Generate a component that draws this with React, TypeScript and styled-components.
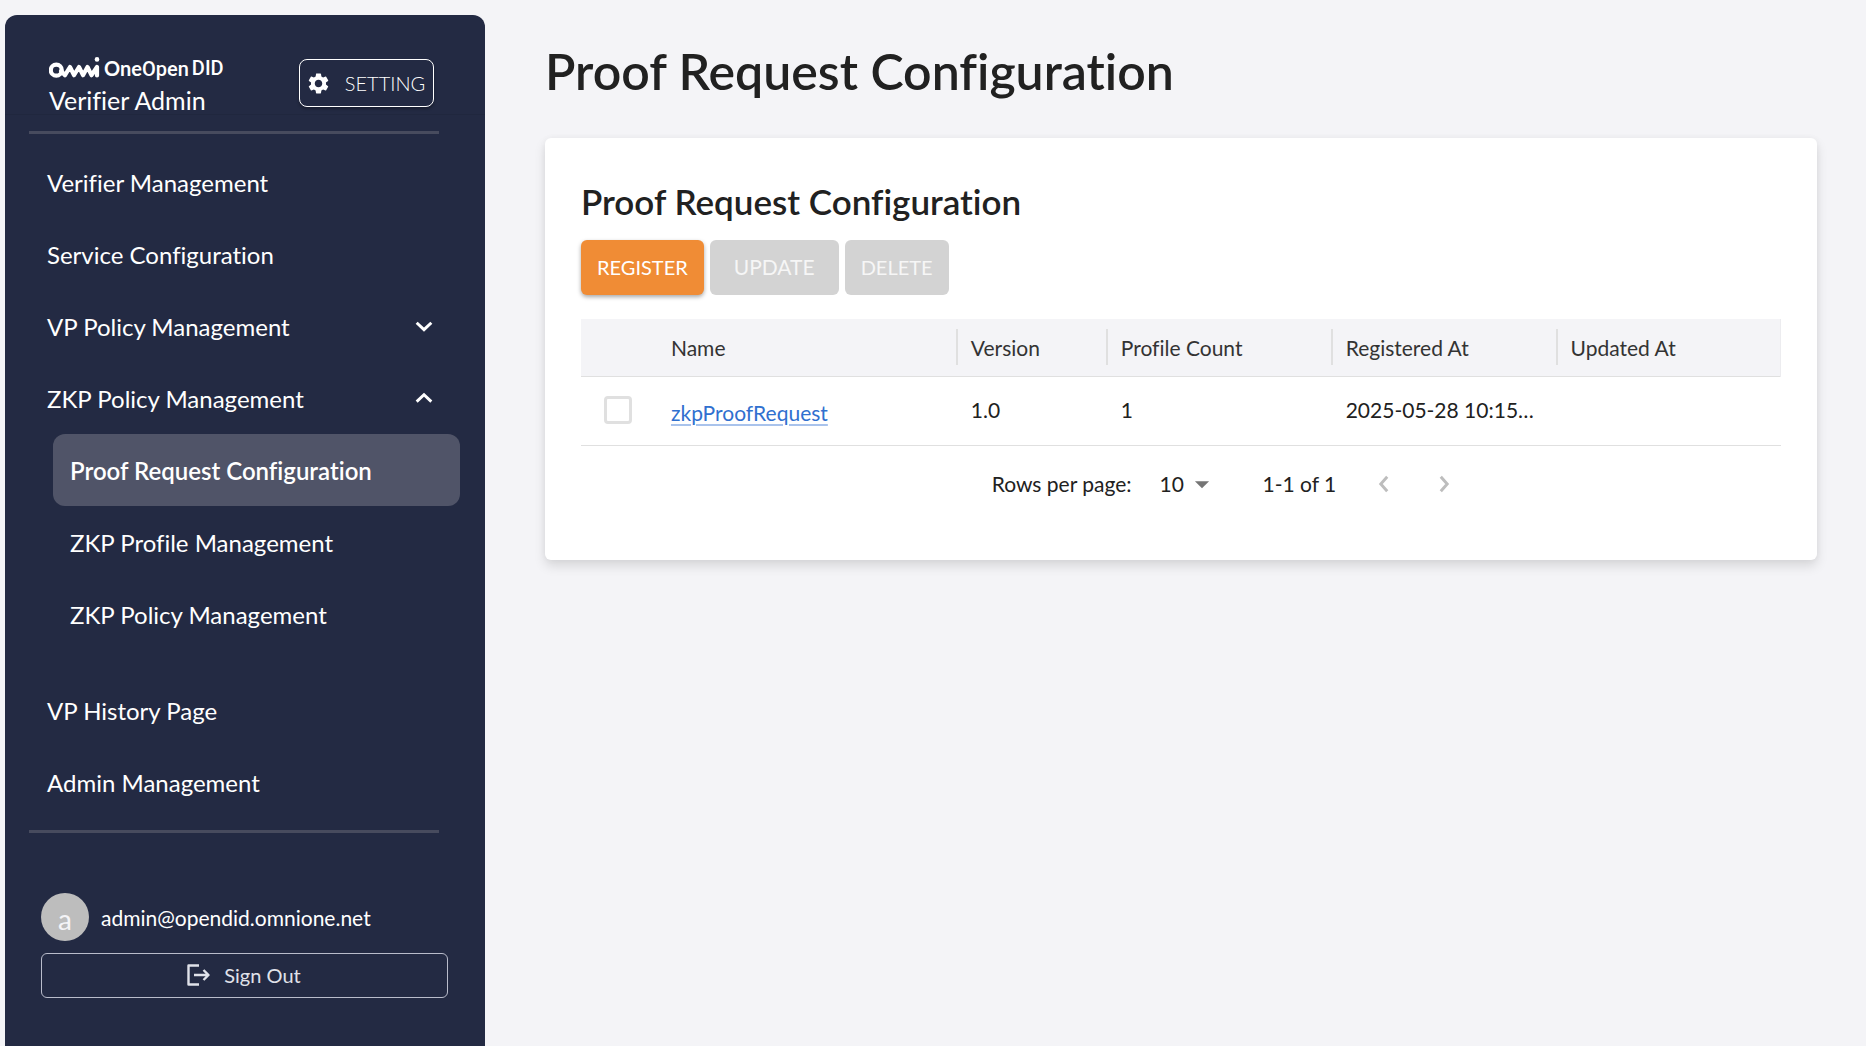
import React, { useState } from "react";
import styled, { createGlobalStyle, css } from "styled-components";
import { MdSettings, MdArrowDropDown } from "react-icons/md";

const Global = createGlobalStyle`
  *, *::before, *::after { box-sizing: border-box; }
  body {
    margin: 0;
    background: #f4f4f7;
    color: #212121;
    font-family: Lato, "Liberation Sans", sans-serif;
    font-size: 21px;
    font-variant-ligatures: none;
  }
  button, input, select { font: inherit; color: inherit; }
  h1, h2, p, ul { margin: 0; padding: 0; }
  ul { list-style: none; }
`;

const Layout = styled.div`
  display: flex;
  align-items: stretch;
  min-height: 100vh;
  padding: 15px 0 0 5px;
`;

const Sidebar = styled.aside`
  flex: 0 0 480px;
  border-radius: 12px 12px 0 0;
  background: #232a43;
  color: #fff;
`;

const Brand = styled.header`
  display: flex;
  justify-content: space-between;
  align-items: flex-start;
  height: 100px;
  margin-bottom: 16px;
  padding: 38px 51px 0 44px;
  border-bottom: 1px solid #20273e;
`;

const Logo = styled.div`
  display: flex;
  align-items: center;
  gap: 4px;
  height: 30px;
`;

const Wordmark = styled.span`
  display: flex;
  gap: 3px;
  font-size: 20px;
  font-weight: 700;
  line-height: 30px;
`;

const Narrow = styled.span`
  font-family: Roboto, sans-serif;
  font-weight: 500;
`;

const Product = styled.p`
  font-size: 25px;
  line-height: 34px;
`;

const SettingButton = styled.button`
  display: flex;
  align-items: center;
  justify-content: center;
  gap: 14px;
  width: 135px;
  height: 48px;
  margin-top: 6px;
  padding: 0 2px 0 0;
  border: 1px solid #fff;
  border-radius: 8px;
  background: transparent;
  box-shadow: 0 2px 3px rgba(0, 0, 0, 0.3);
  font-size: 20px;
  font-weight: 300;
`;

const Divider = styled.hr`
  height: 3px;
  margin: 0 46px 0 24px;
  border: 0;
  background: #474b5e;
`;

const Nav = styled.nav`
  padding: 12px 25px 12px 0;
`;

const rowBase = css`
  display: flex;
  align-items: center;
  justify-content: space-between;
  width: 100%;
  height: 72px;
  border: 0;
  background: transparent;
  color: #fff;
  font-size: 24px;
  text-decoration: none;
`;

const NavLink = styled.a`
  ${rowBase}
  padding: 0 0 0 42px;
`;

const NavToggle = styled.button`
  ${rowBase}
  padding: 0 25px 0 42px;
`;

const SubNav = styled.ul`
  padding: 0 0 24px 48px;
`;

const SubLink = styled.a<{ $active?: boolean }>`
  ${rowBase}
  padding: 0 17px;
  border-radius: 12px;
  background: ${(p) => (p.$active ? "#505468" : "transparent")};
  font-weight: ${(p) => (p.$active ? 600 : 400)};
`;

const Account = styled.div`
  display: grid;
  gap: 12px;
  padding: 60px 37px 48px 36px;
`;

const User = styled.div`
  display: flex;
  align-items: center;
  gap: 12px;
`;

const Avatar = styled.span`
  display: grid;
  place-items: center;
  width: 48px;
  height: 48px;
  padding-top: 4px;
  border-radius: 50%;
  background: #bdbdbd;
  color: #f4f4f7;
  font-size: 28px;
`;

const SignOut = styled.button`
  display: flex;
  align-items: center;
  justify-content: center;
  gap: 14px;
  height: 45px;
  padding: 0 2px 2px 0;
  border: 1px solid #b9bccb;
  border-radius: 6px;
  background: transparent;
  color: #e0e2ea;
  font-size: 20px;
`;

const Main = styled.main`
  flex: 1;
  min-width: 0;
  padding: 22px 49px 48px 60px;
`;

const PageTitle = styled.h1`
  font-size: 50px;
  font-weight: 600;
  line-height: 68px;
`;

const Card = styled.section`
  margin-top: 33px;
  padding: 38px 36px 38px;
  border-radius: 6px;
  background: #fff;
  box-shadow: 0 6px 12px rgba(0, 0, 0, 0.12), 0 0 6px rgba(0, 0, 0, 0.04);
`;

const CardTitle = styled.h2`
  font-size: 35px;
  font-weight: 600;
  line-height: 50px;
`;

const Actions = styled.div`
  display: flex;
  gap: 6px;
  margin: 14px 0 24px;
`;

const Action = styled.button<{ $wide?: boolean }>`
  height: 55px;
  padding: 0 ${(p) => (p.$wide ? 24 : 16)}px 2px;
  border: 0;
  border-radius: 6px;
  background: #f08c35;
  color: #fff;
  font-size: ${(p) => (p.$wide ? 21 : 20)}px;
  box-shadow: 0 2px 4px rgba(0, 0, 0, 0.35);

  &:disabled {
    background: #d3d3d3;
    color: #f6f6f6;
    box-shadow: none;
  }
`;

const Table = styled.table`
  width: 100%;
  table-layout: fixed;
  border-collapse: collapse;
  text-align: left;
`;

const Col = styled.col<{ $share: number }>`
  width: ${(p) => p.$share}%;
`;

const HeadRow = styled.tr`
  height: 57px;
  border-bottom: 1px solid #e0e0e0;
  background: #f4f4f7;
`;

const Th = styled.th<{ $rule?: boolean }>`
  padding: 0 15px;
  color: #333;
  font-weight: 400;
  background: ${(p) => (p.$rule ? "linear-gradient(#e0e0e0, #e0e0e0) left center / 2px 36px no-repeat" : "none")};

  &:last-child { border-right: 1px solid #ececef; }
`;

const BodyRow = styled.tr`
  height: 69px;
  border-bottom: 1px solid #e0e0e0;
`;

const Td = styled.td`
  padding: 0 15px 2px;
  overflow: hidden;
  text-overflow: ellipsis;
  white-space: nowrap;
`;

const CheckCell = styled.td`
  padding: 0 0 2px;
  text-align: center;
`;

const Check = styled.input`
  appearance: none;
  display: block;
  width: 28px;
  height: 28px;
  margin: 0 auto;
  border: 3px solid #e0e0e0;
  border-radius: 4px;
  background: #fff;

  &:checked { background: #f08c35; }
`;

const NameLink = styled.a`
  display: inline-block;
  padding-top: 6px;
  color: #3070cf;
  text-decoration: underline;
  text-decoration-color: #a9c3ec;
  text-decoration-thickness: 2px;
  text-underline-offset: 3px;
`;

const Pager = styled.div`
  display: flex;
  align-items: center;
  justify-content: center;
  height: 76px;
  padding-left: 92px;
`;

const PageSize = styled.span`
  display: flex;
  align-items: center;
  margin: 0 44px 0 28px;

  select {
    appearance: none;
    padding: 0;
    border: 0;
    background: transparent;
  }
  svg { color: #757575; }
`;

const PagerButtons = styled.span`
  display: flex;
  gap: 24px;
  margin-left: 30px;
`;

const IconButton = styled.button`
  display: grid;
  place-items: center;
  width: 36px;
  height: 36px;
  padding: 0;
  border: 0;
  background: transparent;
  color: #bdbdbd;
`;

const OmniMark = () => (
  <svg width="51" height="22" viewBox="0 0 51 22" fill="none" stroke="#fff" strokeLinecap="round" strokeLinejoin="round" aria-label="omni" role="img">
    <circle cx="7.3" cy="13.2" r="5.5" strokeWidth="4.2" />
    <path d="M12 14 L16 18.2 L21 10 L25 18.2 L30 10 L34 18.2 L38.5 10 L42.5 18.2 L48 10 V18.5" strokeWidth="4.2" />
    <circle cx="48" cy="2.4" r="2.3" fill="#fff" stroke="none" />
  </svg>
);

const chevrons = {
  down: "M4 8.5 L12 16 L20 8.5",
  up: "M4 16 L12 8.5 L20 16",
  left: "M15.5 4 L8.5 12 L15.5 20",
  right: "M8.5 4 L15.5 12 L8.5 20",
};

const Chevron = ({ to }: { to: keyof typeof chevrons }) => (
  <svg width="22" height="22" viewBox="0 0 24 24" fill="none" stroke="currentColor" strokeWidth="3.2" aria-hidden="true">
    <path d={chevrons[to]} />
  </svg>
);

const SignOutIcon = () => (
  <svg width="24" height="24" viewBox="0 0 24 24" fill="none" stroke="currentColor" strokeWidth="2.4" strokeLinejoin="round" aria-hidden="true">
    <path d="M13 2.5 H2.5 V21.5 H13 M8 12 H22.5 M17.5 7 L22.5 12 L17.5 17" />
  </svg>
);

const policyPages = ["Proof Request Configuration", "ZKP Profile Management", "ZKP Policy Management"];

export default function App() {
  const [vpOpen, setVpOpen] = useState(false);
  const [zkpOpen, setZkpOpen] = useState(true);
  const [checked, setChecked] = useState(false);

  return (
    <>
      <Global />
      <Layout>
        <Sidebar>
          <Brand>
            <div>
              <Logo>
                <OmniMark />
                <Wordmark>
                  <span>One<Narrow>Open</Narrow></span>
                  <Narrow>DID</Narrow>
                </Wordmark>
              </Logo>
              <Product>Verifier Admin</Product>
            </div>
            <SettingButton type="button">
              <MdSettings size={25} />
              SETTING
            </SettingButton>
          </Brand>
          <Divider />
          <Nav>
            <NavLink href="#verifier">Verifier Management</NavLink>
            <NavLink href="#service">Service Configuration</NavLink>
            <NavToggle type="button" aria-expanded={vpOpen} onClick={() => setVpOpen(!vpOpen)}>
              VP Policy Management
              <Chevron to={vpOpen ? "up" : "down"} />
            </NavToggle>
            <NavToggle type="button" aria-expanded={zkpOpen} onClick={() => setZkpOpen(!zkpOpen)}>
              ZKP Policy Management
              <Chevron to={zkpOpen ? "up" : "down"} />
            </NavToggle>
            {zkpOpen && (
              <SubNav>
                {policyPages.map((page, i) => (
                  <li key={page}>
                    <SubLink href={`#policy-${i}`} $active={i === 0}>{page}</SubLink>
                  </li>
                ))}
              </SubNav>
            )}
            <NavLink href="#history">VP History Page</NavLink>
            <NavLink href="#admin">Admin Management</NavLink>
          </Nav>
          <Divider />
          <Account>
            <User>
              <Avatar>a</Avatar>
              <span>admin@opendid.omnione.net</span>
            </User>
            <SignOut type="button">
              <SignOutIcon />
              Sign Out
            </SignOut>
          </Account>
        </Sidebar>

        <Main>
          <PageTitle>Proof Request Configuration</PageTitle>
          <Card>
            <CardTitle>Proof Request Configuration</CardTitle>
            <Actions>
              <Action type="button">REGISTER</Action>
              <Action type="button" $wide disabled={!checked}>UPDATE</Action>
              <Action type="button" disabled={!checked}>DELETE</Action>
            </Actions>
            <Table>
              <colgroup>
                <Col $share={6.25} />
                <Col $share={25} />
                <Col $share={12.5} />
                <Col $share={18.75} />
                <Col $share={18.75} />
                <Col $share={18.75} />
              </colgroup>
              <thead>
                <HeadRow>
                  <Th aria-label="Select" />
                  <Th>Name</Th>
                  <Th $rule>Version</Th>
                  <Th $rule>Profile Count</Th>
                  <Th $rule>Registered At</Th>
                  <Th $rule>Updated At</Th>
                </HeadRow>
              </thead>
              <tbody>
                <BodyRow>
                  <CheckCell>
                    <Check type="checkbox" aria-label="Select zkpProofRequest" checked={checked} onChange={() => setChecked(!checked)} />
                  </CheckCell>
                  <Td><NameLink href="#zkpProofRequest">zkpProofRequest</NameLink></Td>
                  <Td>1.0</Td>
                  <Td>1</Td>
                  <Td>2025-05-28 10:15…</Td>
                  <Td />
                </BodyRow>
              </tbody>
            </Table>
            <Pager>
              <label htmlFor="page-size">Rows per page:</label>
              <PageSize>
                <select id="page-size" defaultValue="10">
                  <option>10</option>
                  <option>25</option>
                </select>
                <MdArrowDropDown size={34} />
              </PageSize>
              <span>1-1 of 1</span>
              <PagerButtons>
                <IconButton type="button" aria-label="Previous page" disabled><Chevron to="left" /></IconButton>
                <IconButton type="button" aria-label="Next page" disabled><Chevron to="right" /></IconButton>
              </PagerButtons>
            </Pager>
          </Card>
        </Main>
      </Layout>
    </>
  );
}
